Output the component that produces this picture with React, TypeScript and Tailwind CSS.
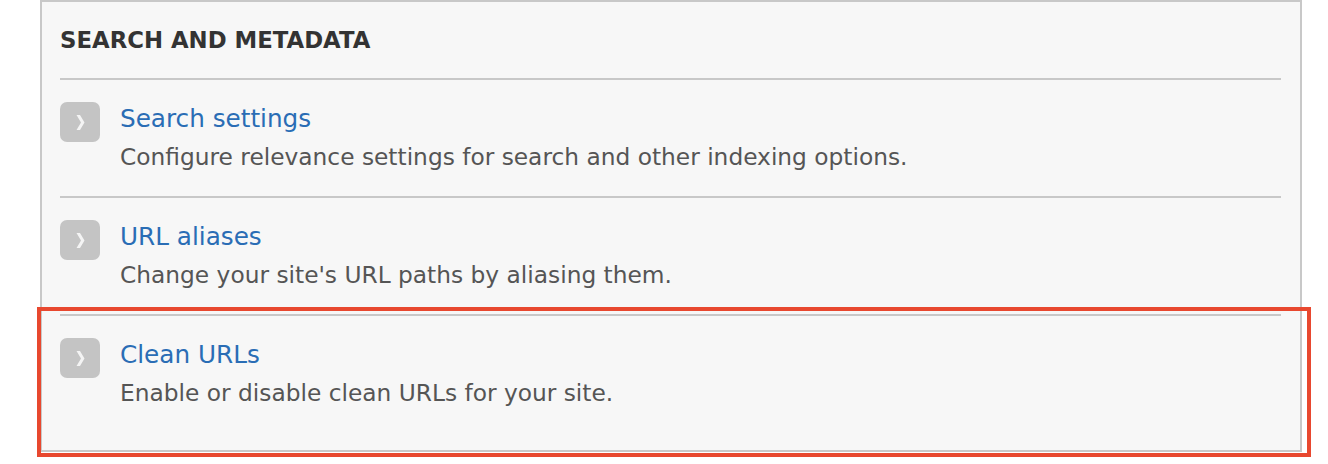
import React from 'react';

const items = [
  {
    title: 'Search settings',
    description: 'Configure relevance settings for search and other indexing options.',
  },
  {
    title: 'URL aliases',
    description: "Change your site's URL paths by aliasing them.",
  },
  {
    title: 'Clean URLs',
    description: 'Enable or disable clean URLs for your site.',
  },
];

const Chevron = () => (
  <div className="w-10 h-10 rounded-[7px] bg-[#c4c4c4] shrink-0">
    <svg width="40" height="40" viewBox="0 0 40 40">
      <polygon points="16.5,13 20,13 24.5,20.5 20,28 16.5,28 21,20.5" fill="#f4f4f4" />
    </svg>
  </div>
);

export default function App() {
  return (
    <div className="relative w-[1328px] h-[464px] bg-white pl-10" style={{ fontFamily: '"DejaVu Sans", sans-serif' }}>
      <div className="w-[1262px] h-[452px] border-2 border-[#c8c8c8] bg-[#f7f7f7] pl-[18px] pr-[19px]">
        <h2 className="pt-[26px] h-[76px] text-[22.8px] leading-6 font-bold text-[#333] uppercase">
          Search and metadata
        </h2>
        {items.map((item, i) => (
          <div
            key={i}
            className={`border-t-2 border-[#c8c8c8] pt-[22px] flex gap-5 ${i === items.length - 1 ? 'h-[136px]' : 'h-[118px]'}`}
          >
            <Chevron />
            <div className="flex flex-col">
              <a href="#" className="text-[24.7px] leading-[30px] text-[#2a6db5] mt-[2px]">
                {item.title}
              </a>
              <p className="text-[23.3px] leading-[30px] text-[#555] mt-2">{item.description}</p>
            </div>
          </div>
        ))}
      </div>
      <div className="absolute left-[37px] top-[307px] w-[1274px] h-[150px] border-4 border-[#e8482f] pointer-events-none" />
    </div>
  );
}
